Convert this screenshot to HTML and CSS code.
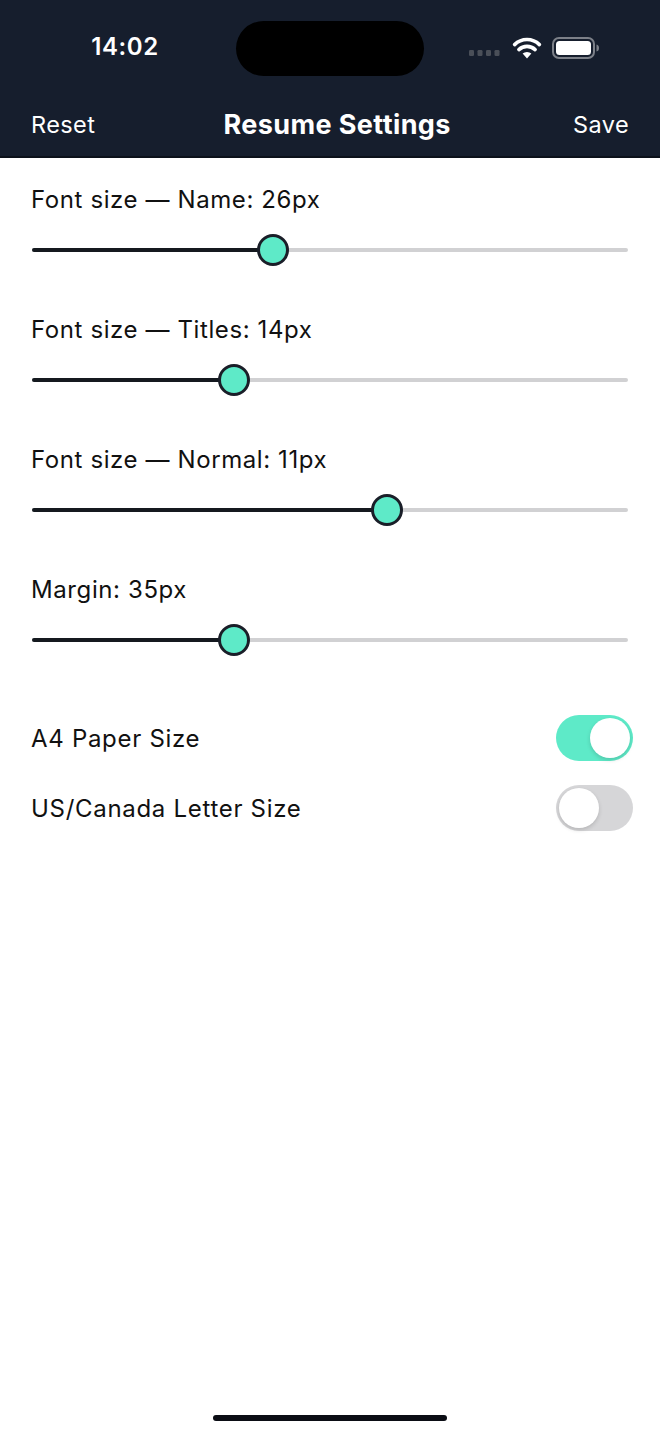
FILE: index.html
```html
<!DOCTYPE html>
<html lang="en">
<head>
    <meta charset="UTF-8">
    <title>Resume Settings</title>
    <link rel="stylesheet" href="styles.css">
</head>
<body>
    <div class="screen">
        <header class="top">
            <div class="status-bar">
                <span class="time">14:02</span>
                <div class="island"></div>
                <div class="status-icons">
                    <svg class="signal" width="32" height="8" viewBox="0 0 32 8">
                        <rect x="0" y="1" width="5" height="6" rx="1.2" fill="#4a4f58"/>
                        <rect x="8.5" y="1" width="5" height="6" rx="1.2" fill="#4a4f58"/>
                        <rect x="17" y="1" width="5" height="6" rx="1.2" fill="#4a4f58"/>
                        <rect x="25.5" y="1" width="5" height="6" rx="1.2" fill="#4a4f58"/>
                    </svg>
                    <svg class="wifi" width="30" height="22" viewBox="0 0 30 22">
                        <path d="M15 21.5 L10.6 16.6 A6.6 6.6 0 0 1 19.4 16.6 Z" fill="#fff"/>
                        <path d="M6.9 12.6 A11.8 11.8 0 0 1 23.1 12.6" stroke="#fff" stroke-width="3.6" fill="none" stroke-linecap="round"/>
                        <path d="M2.6 7.6 A17.8 17.8 0 0 1 27.4 7.6" stroke="#fff" stroke-width="3.6" fill="none" stroke-linecap="round"/>
                    </svg>
                    <svg class="battery" width="48" height="22" viewBox="0 0 48 22">
                        <rect x="1" y="1" width="41" height="20" rx="6" fill="none" stroke="#7c8088" stroke-width="2"/>
                        <rect x="4" y="4" width="35" height="14" rx="3.5" fill="#fff"/>
                        <path d="M44.5 7.5 Q47 8 47 11 Q47 14 44.5 14.5 Z" fill="#7c8088"/>
                    </svg>
                </div>
            </div>
            <nav class="nav-bar">
                <span class="nav-btn">Reset</span>
                <span class="nav-title">Resume Settings</span>
                <span class="nav-btn">Save</span>
            </nav>
        </header>

        <main class="content">
            <div class="setting">
                <div class="setting-label">Font size — Name: 26px</div>
                <div class="slider">
                    <div class="track"></div>
                    <div class="fill" style="width: 40.4%"></div>
                    <div class="thumb" style="left: 40.4%"></div>
                </div>
            </div>
            <div class="setting">
                <div class="setting-label">Font size — Titles: 14px</div>
                <div class="slider">
                    <div class="track"></div>
                    <div class="fill" style="width: 33.9%"></div>
                    <div class="thumb" style="left: 33.9%"></div>
                </div>
            </div>
            <div class="setting">
                <div class="setting-label">Font size — Normal: 11px</div>
                <div class="slider">
                    <div class="track"></div>
                    <div class="fill" style="width: 59.6%"></div>
                    <div class="thumb" style="left: 59.6%"></div>
                </div>
            </div>
            <div class="setting">
                <div class="setting-label">Margin: 35px</div>
                <div class="slider">
                    <div class="track"></div>
                    <div class="fill" style="width: 33.9%"></div>
                    <div class="thumb" style="left: 33.9%"></div>
                </div>
            </div>

            <div class="switches">
                <div class="switch-row">
                    <span class="switch-label">A4 Paper Size</span>
                    <div class="toggle on"><div class="knob"></div></div>
                </div>
                <div class="switch-row">
                    <span class="switch-label">US/Canada Letter Size</span>
                    <div class="toggle"><div class="knob"></div></div>
                </div>
            </div>
        </main>

        <div class="home-bar"></div>
    </div>
</body>
</html>
```

FILE: styles.css
```css
body {
    margin: 0;
    background: #fff;
    font-family: Inter, "Noto Sans", sans-serif;
    color: #111;
}
.screen {
    width: 660px;
    height: 1434px;
    display: flex;
    flex-direction: column;
}
.top {
    background: #161e2d;
    border-bottom: 2px solid #0c111a;
    color: #fff;
}
.status-bar {
    height: 95px;
    display: flex;
    align-items: center;
}
.time {
    width: 250px;
    text-align: center;
    font-size: 24px;
    font-weight: 600;
    letter-spacing: 0.6px;
    margin-top: -2px;
}
.island {
    width: 188px;
    height: 55px;
    border-radius: 28px;
    background: #000;
    margin-left: -14px;
    margin-top: 2px;
}
.status-icons {
    display: flex;
    align-items: center;
    margin-left: 45px;
}
.signal {
    margin-top: 10px;
}
.wifi {
    margin-left: 11px;
}
.battery {
    margin-left: 10px;
}
.nav-bar {
    height: 63px;
    display: flex;
    align-items: center;
    justify-content: space-between;
    padding: 0 31px;
    margin-top: -2px;
}
.nav-btn {
    font-size: 23.5px;
    letter-spacing: 0.4px;
}
.nav-title {
    font-size: 27px;
    font-weight: 700;
    letter-spacing: 0.4px;
    margin-left: 6px;
}
.content {
    flex: 1;
    padding: 27px 31px 0;
}
.setting {
    height: 130px;
}
.setting-label {
    font-size: 24px;
    letter-spacing: 0.6px;
    line-height: 30px;
}
.slider {
    position: relative;
    height: 34px;
    padding-top: 15px;
    box-sizing: border-box;
    margin: 18px 1px 0;
}
.track {
    height: 4px;
    background: #d1d1d3;
    border-radius: 2px;
}
.fill {
    position: absolute;
    left: 0;
    top: 15px;
    height: 4px;
    background: #15191f;
    border-radius: 2px;
}
.thumb {
    position: absolute;
    top: 1px;
    width: 26px;
    height: 26px;
    margin-left: -16px;
    border: 3px solid #1a1e28;
    border-radius: 50%;
    background: #5eeac8;
}
.switches {
    margin: -2px -4px 0 0;
}
.switch-row {
    height: 70px;
    display: flex;
    align-items: center;
    justify-content: space-between;
}
.switch-label {
    font-size: 24px;
    letter-spacing: 0.7px;
}
.toggle {
    width: 77px;
    height: 46px;
    border-radius: 23px;
    background: #d6d6d8;
    display: flex;
    align-items: center;
    padding: 0 3px;
    box-sizing: border-box;
}
.toggle.on {
    background: #5eeac8;
    justify-content: flex-end;
}
.knob {
    width: 40px;
    height: 40px;
    border-radius: 50%;
    background: #fff;
    box-shadow: 0 2px 4px rgba(0,0,0,0.15);
}
.home-bar {
    width: 234px;
    height: 6px;
    border-radius: 3px;
    background: #0b0d14;
    margin: 0 auto 13px;
}
```
